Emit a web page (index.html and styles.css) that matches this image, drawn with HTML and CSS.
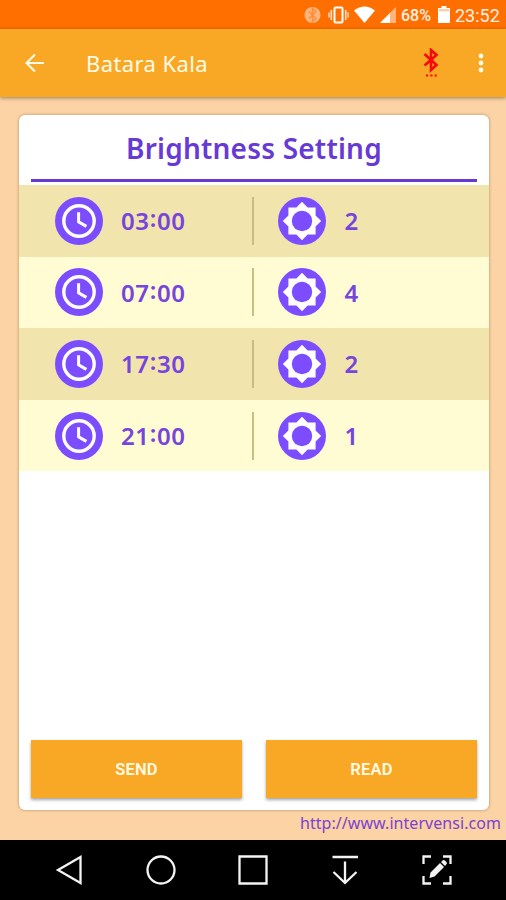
FILE: index.html
```html
<!DOCTYPE html>
<html lang="en">
<head>
<meta charset="UTF-8">
<meta name="viewport" content="width=device-width, initial-scale=1.0">
<title>Batara Kala</title>
<link rel="stylesheet" href="styles.css">
</head>
<body>
  <!-- shared icons -->
  <svg class="defs" width="0" height="0">
    <symbol id="clock" viewBox="0 0 48 48">
      <circle cx="24" cy="24" r="24" fill="#7c4dff"/>
      <circle cx="24" cy="24" r="15.2" fill="none" stroke="#fff" stroke-width="3.4"/>
      <path d="M23.6 15.200v9.600l7.800 4.600" fill="none" stroke="#fff" stroke-width="3"/>
    </symbol>
    <symbol id="sun" viewBox="0 0 48 48">
      <circle cx="24" cy="24" r="24" fill="#7c4dff"/>
      <path d="M24 4.8l5.6 5.6H37.600v8L43.200 24l-5.600 5.600v8h-8L24 43.200l-5.600-5.600h-8v-8L4.800 24l5.600-5.600v-8h8z" fill="#fff"/>
      <circle cx="24" cy="24" r="10.200" fill="#7c4dff"/>
    </symbol>
  </svg>

  <div class="status-bar">
    <svg class="status-icons" width="100" height="29" viewBox="0 0 100 29">
      <circle cx="14.500" cy="15" r="8" fill="#ffb57c"/>
      <path d="M11 11.500l7 7-3.500 3V8.500l3.500 3-7 7" fill="none" stroke="#ff8b35" stroke-width="1.300"/>
      <rect x="36.500" y="7.500" width="8" height="15" rx="1" fill="none" stroke="#fff" stroke-width="2"/>
      <path d="M33.300 10v10M47.700 10v10" stroke="#ffe0c8" stroke-width="1.600"/>
      <path d="M31 12.500v5M50 12.500v5" stroke="#ffe0c8" stroke-width="1.400"/>
      <path d="M56 10.500Q66.500 2.500 77 10.500L66.500 23z" fill="#fff"/>
      <path d="M82 23L98 7v16z" fill="#ffb57c"/>
      <path d="M82 23l10-10v10z" fill="#fff"/>
    </svg>
    <span class="percent">68%</span>
    <svg class="battery" width="12" height="17" viewBox="0 0 12 17">
      <path d="M3.500 0h5v2H12v15H0V2h3.500z" fill="#fff"/>
      <path d="M1 3h10v2.500H1z" fill="#ffd0a8"/>
    </svg>
    <span class="time">23:52</span>
  </div>

  <header class="app-bar">
    <svg width="20" height="20" viewBox="0 0 20 20">
      <path d="M19 10H2M10 1.500L1.500 10l8.500 8.500" fill="none" stroke="#fffbe6" stroke-width="2.100"/>
    </svg>
    <h1>Batara Kala</h1>
    <svg class="bluetooth" width="18" height="30" viewBox="0 0 18 30">
      <path d="M2.500 6l12 11-5.500 5V2l5.500 5-12 10.500" fill="none" stroke="#f50b0b" stroke-width="2.600"/>
      <path d="M4 27.500h2.200M8.300 27.500h2.200M12.600 27.500h2.200" stroke="#f50b0b" stroke-width="2.200"/>
    </svg>
    <svg class="more" width="6" height="20" viewBox="0 0 6 20">
      <g fill="#fffbe6">
        <circle cx="3" cy="3" r="2.400"/>
        <circle cx="3" cy="10" r="2.400"/>
        <circle cx="3" cy="17" r="2.400"/>
      </g>
    </svg>
  </header>

  <main>
    <div class="card">
      <h2><span>Brightness Setting</span></h2>
      <div class="schedule">
        <div class="row">
          <div class="cell hour"><svg class="icon"><use href="#clock"/></svg><span>03<i>:</i>00</span></div>
          <div class="cell"><svg class="icon"><use href="#sun"/></svg><span>2</span></div>
        </div>
        <div class="row">
          <div class="cell hour"><svg class="icon"><use href="#clock"/></svg><span>07<i>:</i>00</span></div>
          <div class="cell"><svg class="icon"><use href="#sun"/></svg><span>4</span></div>
        </div>
        <div class="row">
          <div class="cell hour"><svg class="icon"><use href="#clock"/></svg><span>17<i>:</i>30</span></div>
          <div class="cell"><svg class="icon"><use href="#sun"/></svg><span>2</span></div>
        </div>
        <div class="row">
          <div class="cell hour"><svg class="icon"><use href="#clock"/></svg><span>21<i>:</i>00</span></div>
          <div class="cell"><svg class="icon"><use href="#sun"/></svg><span>1</span></div>
        </div>
      </div>
      <div class="buttons">
        <button type="button">SEND</button>
        <button type="button">READ</button>
      </div>
    </div>
    <div class="link">http://www.intervensi.com</div>
  </main>

  <nav class="nav-bar">
    <svg viewBox="0 0 32 32"><path d="M27.500 3v26L5 16z"/></svg>
    <svg viewBox="0 0 32 32"><circle cx="16" cy="16" r="13.500"/></svg>
    <svg viewBox="0 0 32 32"><path d="M2.500 2.500h27v27h-27z"/></svg>
    <svg viewBox="0 0 32 32"><path d="M3.500 3h25.500M16 7.500v21M4.500 18L16 29l11.500-11"/></svg>
    <svg viewBox="0 0 32 32">
      <path d="M2.500 10V2.500H10M22 2.500h7.500V10M29.500 22v7.500H22M10 29.500H2.500V22"/>
      <path class="pencil" d="M8.500 24l1-5.500 9.500-9.500 4 4-9.500 9.500zM20 8l1.900-1.700q1-.7 2 .3l1.500 1.500q1 1 .2 2L24 12z"/>
    </svg>
  </nav>
</body>
</html>
```
FILE: styles.css
```css
* {
  box-sizing: border-box;
}

body {
  margin: 0;
  height: 900px;
  display: flex;
  flex-direction: column;
  overflow: hidden;
  font-family: "Noto Sans", sans-serif;
  background: #fbd3a4;
}

.defs {
  position: absolute;
}

/* Android status bar */
.status-bar {
  height: 29px;
  flex: none;
  display: flex;
  align-items: center;
  justify-content: flex-end;
  padding-right: 6px;
  background: #ff6f00;
  color: #fff0e2;
  font-family: Roboto, sans-serif;
}

.percent {
  width: 33px;
  margin-left: 3px;
  font-size: 16px;
  font-weight: 500;
  line-height: 29px;
  padding-top: 2px;
}

.battery {
  margin: 0 5px 0 4px;
}

.time {
  width: 45px;
  font-size: 18px;
  line-height: 29px;
  padding-top: 2px;
  white-space: nowrap;
}

/* Toolbar */
.app-bar {
  position: relative;
  height: 68px;
  flex: none;
  display: flex;
  align-items: center;
  padding: 0 22px 0 25px;
  background: #f9a825;
  box-shadow: 0 1px 4px rgba(0, 0, 0, 0.4);
}

.app-bar h1 {
  flex: 1;
  margin: 0 0 0 41px;
  font-size: 22px;
  font-weight: 400;
  letter-spacing: 0.4px;
  color: #fffbe6;
}

.bluetooth {
  margin-right: 38px;
}

main {
  flex: 1;
  padding: 18px 17px 0 19px;
}

.card {
  height: 695px;
  display: flex;
  flex-direction: column;
  background: #fff;
  border-radius: 6px;
  box-shadow: 0 0 3px rgba(90, 70, 30, 0.5);
}

.card h2 {
  height: 70px;
  margin: 0;
  padding: 0 12px;
  color: #673ad6;
  font-size: 28px;
  font-weight: 600;
  letter-spacing: 0.2px;
  line-height: 67px;
  text-align: center;
}

.card h2 span {
  display: block;
  height: 67px;
  border-bottom: 3px solid #6738d3;
}

/* Schedule rows */
.schedule {
  flex: 1;
}

.row {
  height: 71.600px;
  display: flex;
  align-items: center;
  background: #fffbd2;
}

.row:nth-child(odd) {
  background: #f2e4ad;
}

.cell {
  height: 48px;
  display: flex;
  align-items: center;
  padding-left: 24px;
  color: #7645dc;
  font-size: 24px;
  font-weight: 600;
  letter-spacing: 0.6px;
}

.hour {
  width: 235px;
  padding-left: 35.500px;
  border-right: 2px solid #c9bd84;
}

.icon {
  width: 48px;
  height: 48px;
  margin-right: 18.500px;
}

/* raised colon between hours and minutes */
.cell i {
  font-style: normal;
  position: relative;
  top: -3px;
}

.buttons {
  display: flex;
  gap: 24px;
  padding: 0 12px 12px;
}

.buttons button {
  flex: 1;
  height: 58px;
  border: none;
  background: #f9a825;
  color: #fffbe6;
  font-family: Roboto, sans-serif;
  font-size: 16.500px;
  font-weight: 600;
  letter-spacing: 0.2px;
  box-shadow: 0 2px 3px rgba(0, 0, 0, 0.35);
}

.link {
  margin-right: -12px;
  color: #7c42d0;
  font-size: 16px;
  letter-spacing: 0.05px;
  line-height: 26px;
  text-align: right;
}

/* Android navigation */
.nav-bar {
  height: 60px;
  flex: none;
  display: flex;
  justify-content: space-between;
  align-items: center;
  padding: 0 53px;
  background: #000;
}

.nav-bar svg {
  width: 32px;
  height: 32px;
  fill: none;
  stroke: #f4f4f4;
  stroke-width: 2.300;
}

.nav-bar .pencil {
  fill: #f4f4f4;
  stroke: none;
}
```
